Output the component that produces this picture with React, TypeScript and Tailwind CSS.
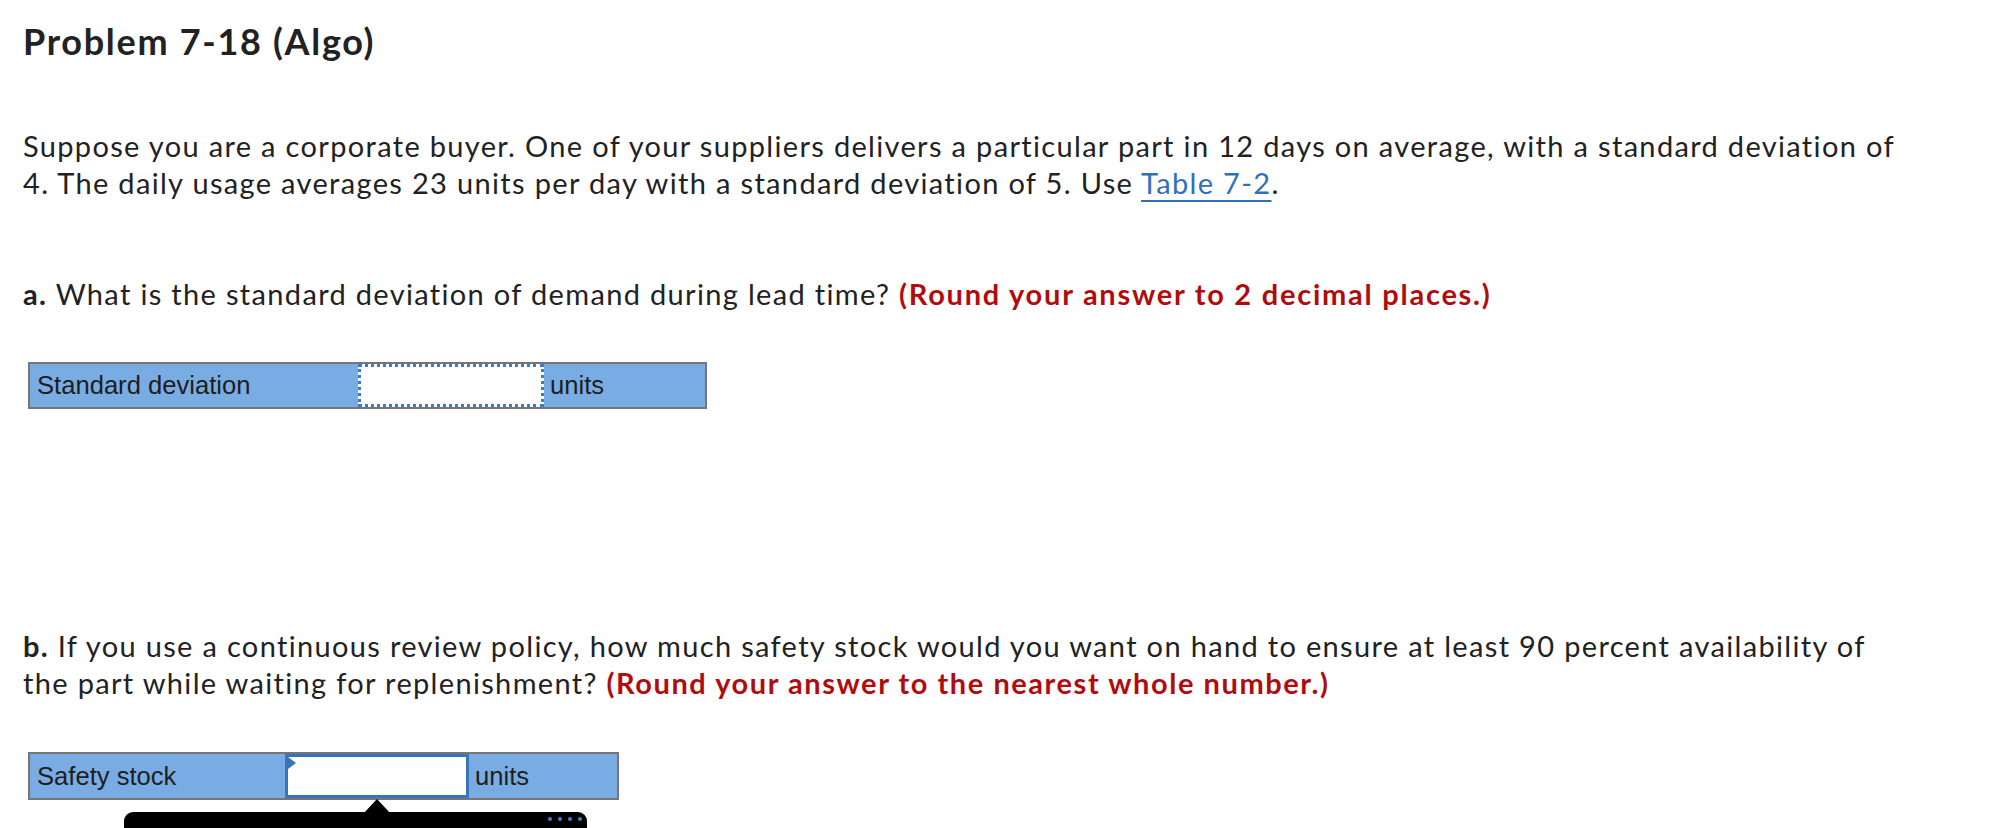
import React from "react";

export default function App() {
  return (
    <div className="w-[2006px] h-[828px] overflow-hidden bg-white text-[#222] font-['Lato','Open_Sans',sans-serif]">
      <div className="pl-[23px] pt-[19px]">
        <h1 className="text-[36px] leading-[44px] font-bold tracking-[1.7px] text-[#222]">Problem 7-18 (Algo)</h1>

        <p className="mt-[64px] w-[1970px] text-[29px] leading-[37px] tracking-[1.33px]">
          Suppose you are a corporate buyer. One of your suppliers delivers a particular part in 12 days on average, with a standard deviation of
          <br />
          4. The daily usage averages 23 units per day with a standard deviation of 5. Use{" "}
          <a className="text-[#2f6fbd] underline decoration-[2px] underline-offset-[6px]">Table 7-2</a>.
        </p>

        <p className="mt-[74px] w-[1970px] text-[29px] leading-[37px] tracking-[1.33px]">
          <b className="font-bold">a.</b> What is the standard deviation of demand during lead time?{" "}
          <b className="font-bold tracking-[1.75px] text-[#b10c0c]">(Round your answer to 2 decimal places.)</b>
        </p>

        <div className="mt-[50px] ml-[5px] flex w-[679px] h-[47px] border-2 border-[#767676] bg-[#79ace3] font-['Liberation_Sans',Arial,sans-serif] text-[25.6px] text-[#1e1e1e]">
          <div className="w-[328px] flex items-center pl-[7px]">Standard deviation</div>
          <div className="w-[186px] bg-white border-[3px] border-dotted border-[#3b7bcc]" />
          <div className="flex-1 flex items-center pl-[6px]">units</div>
        </div>

        <p className="mt-[218px] w-[1970px] text-[29px] leading-[37px] tracking-[1.33px]">
          <b className="font-bold">b.</b> If you use a continuous review policy, how much safety stock would you want on hand to ensure at least 90 percent availability of
          <br />
          the part while waiting for replenishment?{" "}
          <b className="font-bold tracking-[1.55px] text-[#b10c0c]">(Round your answer to the nearest whole number.)</b>
        </p>

        <div className="mt-[51px] ml-[5px] flex w-[591px] h-[48px] border-2 border-[#767676] bg-[#79ace3] font-['Liberation_Sans',Arial,sans-serif] text-[25.6px] text-[#1e1e1e]">
          <div className="w-[255px] flex items-center pl-[7px]">Safety stock</div>
          <div className="relative w-[184px] bg-white border-[3px] border-[#3a73b8]">
            <div className="absolute left-0 top-0 w-0 h-0 border-t-[6px] border-b-[6px] border-l-[8px] border-t-transparent border-b-transparent border-l-[#3a73b8]" />
            <div className="absolute left-1/2 -translate-x-1/2 top-[42px] w-0 h-0 border-l-[13px] border-r-[13px] border-b-[14px] border-l-transparent border-r-transparent border-b-black" />
          </div>
          <div className="flex-1 flex items-center pl-[6px]">units</div>
        </div>

        <div className="mt-[12px] ml-[101px] w-[463px] h-[60px] bg-black rounded-[9px] relative">
          <div className="absolute right-[5px] top-[5px] flex gap-x-[6px]">
            <span className="w-[4px] h-[4px] rounded-full bg-[#4a80c4]" />
            <span className="w-[4px] h-[4px] rounded-full bg-[#4a80c4]" />
            <span className="w-[4px] h-[4px] rounded-full bg-[#4a80c4]" />
            <span className="w-[4px] h-[4px] rounded-full bg-[#4a80c4]" />
          </div>
        </div>
      </div>
    </div>
  );
}
